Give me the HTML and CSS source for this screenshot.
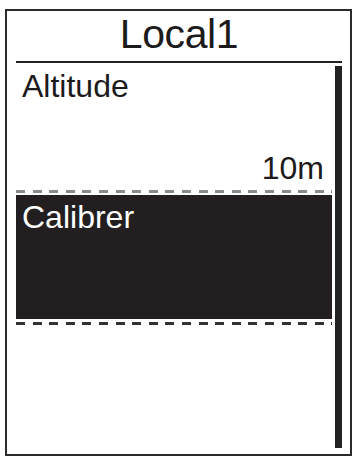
FILE: index.html
```html
<!DOCTYPE html>
<html>
<head>
<meta charset="utf-8">
<link rel="stylesheet" href="styles.css">
</head>
<body>
<div class="device">
  <div class="title">Local1</div>
  <div class="body">
    <div class="list">
      <div class="field">
        <div class="label">Altitude</div>
        <div class="value">10m</div>
      </div>
      <div class="dash light"></div>
      <div class="field selected">
        <div class="label">Calibrer</div>
      </div>
      <div class="dash dark"></div>
    </div>
    <div class="scrollbar"></div>
  </div>
</div>
</body>
</html>
```
FILE: styles.css
```css
html, body {
  margin: 0;
  padding: 0;
  background: #fff;
}
body {
  font-family: "Liberation Sans", Arial, sans-serif;
  color: #1c1a1b;
}
.device {
  box-sizing: border-box;
  margin: 9px 0 0 5px;
  width: 347px;
  height: 447px;
  border: 2px solid #2b2b2b;
  padding: 0 8px 0 9px;
  display: flex;
  flex-direction: column;
}
.title {
  height: 50px;
  border-bottom: 2px solid #222;
  text-align: center;
  font-size: 41px;
  line-height: 46px;
  letter-spacing: -0.4px;
}
.body {
  flex: 1;
  display: flex;
  gap: 3px;
}
.list {
  width: 316px;
  display: flex;
  flex-direction: column;
}
.field {
  box-sizing: border-box;
  height: 127px;
  padding: 5px 8px 4px 6px;
  display: flex;
  flex-direction: column;
  justify-content: space-between;
  font-size: 32px;
  line-height: 36px;
}
.value {
  text-align: right;
}
.field.selected {
  height: 124px;
  padding-top: 4px;
  background: #231f20;
  color: #fff;
}
.dash {
  height: 3px;
  background-image: repeating-linear-gradient(to right, currentColor 0 9px, transparent 9px 16.6px);
}
.dash.light {
  color: #8a8a8a;
  margin-bottom: 2px;
}
.dash.dark {
  color: #333;
  margin-top: 3px;
}
.scrollbar {
  width: 7px;
  margin: 3px 0 6px;
  background: #222;
}
```
